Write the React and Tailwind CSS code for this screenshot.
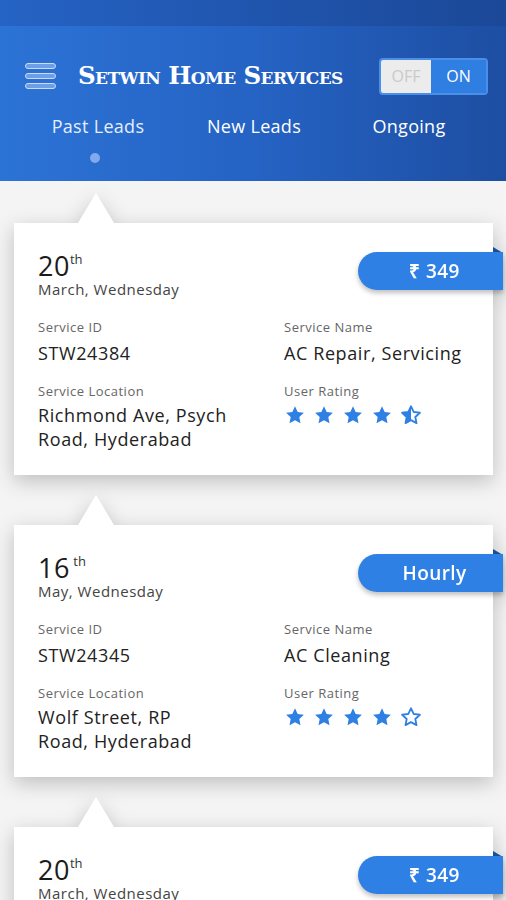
import { useState } from "react";

const leads = [
  {
    day: "20",
    suffix: "th",
    date: "March, Wednesday",
    badge: "₹ 349",
    id: "STW24384",
    name: "AC Repair, Servicing",
    location: ["Richmond Ave, Psych", "Road, Hyderabad"],
    rating: 4.5,
  },
  {
    day: "16",
    suffix: " th",
    date: "May, Wednesday",
    badge: "Hourly",
    id: "STW24345",
    name: "AC Cleaning",
    location: ["Wolf Street, RP", "Road, Hyderabad"],
    rating: 4,
  },
  {
    day: "20",
    suffix: "th",
    date: "March, Wednesday",
    badge: "₹ 349",
    id: "STW24384",
    name: "AC Repair, Servicing",
    location: ["Richmond Ave, Psych", "Road, Hyderabad"],
    rating: 4.5,
  },
];

const STAR = "M12 2.5l2.9 6.2 6.8.8-5 4.7 1.3 6.7L12 17.6l-6 3.3 1.3-6.7-5-4.7 6.8-.8z";

function Star({ kind }) {
  return (
    <svg viewBox="0 0 24 24" className="w-[22px] h-[22px]">
      <defs>
        <clipPath id="halfclip">
          <rect x="0" y="0" width="12" height="24" />
        </clipPath>
      </defs>
      {kind === "full" && <path d={STAR} fill="#2f80e4" />}
      {kind === "half" && (
        <>
          <path d={STAR} fill="none" stroke="#2f80e4" strokeWidth="2" strokeLinejoin="round" />
          <path d={STAR} fill="#2f80e4" clipPath="url(#halfclip)" />
        </>
      )}
      {kind === "empty" && (
        <path d={STAR} fill="none" stroke="#2f80e4" strokeWidth="2" strokeLinejoin="round" />
      )}
    </svg>
  );
}

function Stars({ rating }) {
  const items = [1, 2, 3, 4, 5].map((i) =>
    rating >= i ? "full" : rating >= i - 0.5 ? "half" : "empty"
  );
  return (
    <div className="flex gap-[7px] mt-[3px]">
      {items.map((k, i) => (
        <Star key={i} kind={k} />
      ))}
    </div>
  );
}

function LeadCard({ lead }) {
  return (
    <div className="drop-shadow-[0_6px_10px_rgba(0,0,0,0.22)]">
      {/* notch */}
      <div className="ml-[64px] w-[36px] h-[30px] bg-white [clip-path:polygon(50%_0,100%_100%,0_100%)]" />
      <div className="relative bg-white h-[252px] pl-[24px] pr-[20px] pt-[29px]">
        {/* badge */}
        <div className="absolute right-[-10px] top-[24px] w-[10px] h-[6px] bg-[#1a4f9c] [clip-path:polygon(0_0,100%_100%,0_100%)]" />
        <div className="absolute right-[-10px] top-[29px] w-[145px] h-[38px] rounded-l-full bg-[#2f80e4] shadow-[0_3px_5px_rgba(0,0,0,0.25)] flex items-center justify-center text-white text-[19px] font-semibold tracking-[0.4px] pl-[8px]">
          {lead.badge}
        </div>

        <div className="leading-none h-[27px]">
          <span className="text-[27px] text-[#1b1b1b] tracking-[0.5px]">{lead.day}</span>
          <span className="text-[13px] text-[#333] align-[12px] whitespace-pre">{lead.suffix}</span>
        </div>
        <div className="text-[15px] leading-[18px] text-[#444] tracking-[0.5px] mt-[1px]">{lead.date}</div>

        <div className="grid grid-cols-[246px_1fr] mt-[20px] tracking-[0.5px]">
          <div>
            <div className="text-[13px] text-[#666]">Service ID</div>
            <div className="text-[18px] text-[#222] mt-[2px] tracking-[0.6px]">{lead.id}</div>
            <div className="text-[13px] text-[#666] mt-[15px]">Service Location</div>
            <div className="text-[18px] text-[#222] leading-[24px] mt-[2px] tracking-[0.6px]">
              {lead.location[0]}
              <br />
              {lead.location[1]}
            </div>
          </div>
          <div>
            <div className="text-[13px] text-[#666]">Service Name</div>
            <div className="text-[18px] text-[#222] mt-[2px] tracking-[0.6px] whitespace-nowrap">{lead.name}</div>
            <div className="text-[13px] text-[#666] mt-[15px]">User Rating</div>
            <Stars rating={lead.rating} />
          </div>
        </div>
      </div>
    </div>
  );
}

export default function App() {
  const [on, setOn] = useState(true);
  const tabs = ["Past Leads", "New Leads", "Ongoing"];

  return (
    <div className="w-[506px] h-[900px] overflow-hidden bg-[#f4f4f4] font-['Open_Sans',sans-serif]">
      {/* header */}
      <header className="h-[181px] bg-gradient-to-r from-[#2c73d6] via-[#2563c4] to-[#1d4ea2] relative">
        <div className="h-[26px] bg-gradient-to-r from-[#2461c2] to-[#1b4796] opacity-90" />
        <div className="flex items-center pl-[25px] pr-[18px] mt-[31px] h-[38px]">
          <div className="flex flex-col gap-[4px] w-[31px]">
            <span className="h-[6px] rounded-[3px] bg-[#6d9ee6] border border-[#c9dcf7]" />
            <span className="h-[6px] rounded-[3px] bg-[#6d9ee6] border border-[#c9dcf7]" />
            <span className="h-[6px] rounded-[3px] bg-[#6d9ee6] border border-[#c9dcf7]" />
          </div>
          <div className="ml-[22px] text-white font-['DejaVu_Serif',serif] font-black [font-variant:small-caps] text-[24.5px] tracking-[-0.6px] leading-none">
            Setwin Home Services
          </div>
          <div className="ml-auto flex h-[37px] w-[109px] rounded-[4px] border-2 border-[#4b8fe8] overflow-hidden text-[16px]">
            <button
              onClick={() => setOn(false)}
              className="w-[50px] bg-[#ececec] text-[#cacaca] flex items-center justify-center"
            >
              OFF
            </button>
            <button
              onClick={() => setOn(true)}
              className="flex-1 bg-[#2f7fe2] text-white flex items-center justify-center"
            >
              ON
            </button>
          </div>
        </div>
        <div className="grid grid-cols-[196px_116px_1fr] mt-[18px] text-[18px] tracking-[0.3px] text-white">
          {tabs.map((t, i) => (
            <div key={t} className="flex flex-col items-center">
              <span className={i === 0 ? "text-[#e4eeff]" : ""}>{t}</span>
              {i === 0 && <span className="w-[10px] h-[10px] rounded-full bg-[#82a9f0] mt-[13px] -ml-[6px]" />}
            </div>
          ))}
        </div>
      </header>

      {/* leads */}
      <div className="pt-[12px] px-[14px] pr-[13px] flex flex-col gap-[20px]">
        {leads.map((l, i) => (
          <LeadCard key={i} lead={l} />
        ))}
      </div>
    </div>
  );
}
